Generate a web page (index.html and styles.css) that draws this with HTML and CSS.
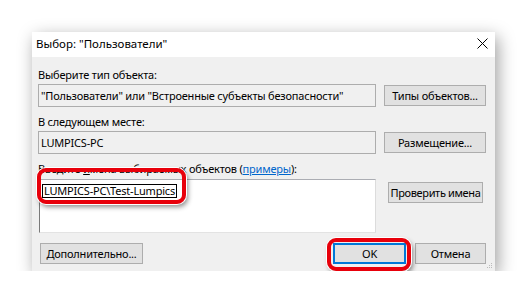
FILE: index.html
```html
<!DOCTYPE html>
<html lang="ru">
<head>
  <meta charset="UTF-8">
  <meta name="viewport" content="width=device-width, initial-scale=1.0">
  <title>Выбор: "Пользователи"</title>
  <link rel="stylesheet" href="styles.css">
</head>
<body>
  <div class="dialog">
    <div class="titlebar">
      <span class="title">Выбор: "Пользователи"</span>
      <span class="close">
        <svg width="11" height="11" viewBox="0 0 11 11"><path d="M0.5 0.5 L10.5 10.5 M10.5 0.5 L0.5 10.5" stroke="#000" stroke-width="1" fill="none"/></svg>
      </span>
    </div>
    <div class="content">
      <div class="label">Выберите тип объекта:</div>
      <div class="row">
        <div class="field readonly">"Пользователи" или "Встроенные субъекты безопасности"</div>
        <button class="btn">Типы объектов...</button>
      </div>

      <div class="label">В следующем месте:</div>
      <div class="row">
        <div class="field readonly">LUMPICS-PC</div>
        <button class="btn">Размещение...</button>
      </div>

      <div class="label">Введите <u>и</u>мена выбираемых объектов (<a class="link">примеры</a>):</div>
      <div class="row top">
        <div class="field names"><span class="entry">LUMPICS-PC\Test-Lumpics</span></div>
        <button class="btn check">Проверить имена</button>
      </div>

      <div class="footer">
        <button class="btn wide">Дополнительно...</button>
        <div class="spacer"></div>
        <button class="btn default">OK</button>
        <button class="btn cancel">Отмена</button>
      </div>
    </div>

    <svg class="grip" width="6" height="6" viewBox="0 0 6 6">
      <rect x="4" y="0" width="1" height="1" fill="#bbb"/>
      <rect x="2" y="2" width="1" height="1" fill="#bbb"/>
      <rect x="4" y="2" width="1" height="1" fill="#bbb"/>
      <rect x="0" y="4" width="1" height="1" fill="#bbb"/>
      <rect x="2" y="4" width="1" height="1" fill="#bbb"/>
      <rect x="4" y="4" width="1" height="1" fill="#bbb"/>
    </svg>

    <div class="mark mark-input"></div>
    <div class="mark mark-ok"></div>
  </div>
</body>
</html>
```

FILE: styles.css
```css
body {
  margin: 0;
  padding: 32px 0 0 32px;
  background: #ffffff;
  font-family: "Noto Sans", "Open Sans", sans-serif;
  font-size: 11px;
  letter-spacing: -0.2px;
  color: #000;
}

.dialog {
  position: relative;
  width: 463px;
  height: 239px;
  display: flex;
  flex-direction: column;
  background: #f0f0f0;
  box-shadow: 3px 5px 16px rgba(0, 0, 0, 0.38);
}

.titlebar {
  height: 25px;
  background: #ffffff;
  display: flex;
  align-items: center;
  justify-content: space-between;
  padding: 0 7px 0 4px;
}

.title {
  font-size: 11.5px;
  letter-spacing: 0;
  margin-top: -2px;
}

.close {
  display: flex;
  margin-top: -3px;
}

.content {
  flex: 1;
  display: flex;
  flex-direction: column;
  padding: 10px 9px 0 6px;
}

.label {
  height: 16px;
  line-height: 16px;
  white-space: nowrap;
}

.label u {
  text-decoration: underline;
}

.link {
  color: #0066cc;
  text-decoration: underline;
}

.row {
  display: flex;
  align-items: center;
  gap: 8px;
  margin: 1px 0 7px;
}

.row.top {
  align-items: flex-start;
  margin-top: 2px;
}

.field {
  flex: 1;
  box-sizing: border-box;
  height: 23px;
  padding: 0 2px;
  display: flex;
  align-items: center;
  white-space: nowrap;
  overflow: hidden;
}

.field.readonly {
  background: #f0f0f0;
  border: 1px solid #adadad;
}

.field.names {
  height: 54px;
  margin-left: 1px;
  align-items: flex-start;
  background: #ffffff;
  border-top: 1px solid #abadb3;
  border-left: 1px solid #7a7a7a;
  border-right: 1px solid #dcdcdc;
  border-bottom: 1px solid #e3e3e3;
  padding: 4px 0 0 2px;
}

.entry {
  border: 1px solid #000;
  padding: 0 1px;
  line-height: 12px;
}

.btn {
  box-sizing: border-box;
  width: 102px;
  height: 21px;
  padding: 0;
  font-family: inherit;
  font-size: 11px;
  letter-spacing: -0.2px;
  white-space: nowrap;
  color: #000;
  background: #e1e1e1;
  border: 1px solid #adadad;
}

.btn.check {
  width: 95px;
  margin: 3px 3px 0 4px;
  letter-spacing: -0.35px;
}

.footer {
  display: flex;
  align-items: center;
  gap: 9px;
  padding-left: 2px;
  margin-top: 3px;
}

.spacer {
  flex: 1;
}

.btn.wide {
  width: 103px;
}

.btn.default {
  width: 73px;
  border: 2px solid #0078d7;
}

.btn.cancel {
  width: 71px;
}

.grip {
  position: absolute;
  right: 2px;
  bottom: 2px;
}

.mark {
  position: absolute;
  box-sizing: border-box;
  border: 4px solid #e8000b;
  border-radius: 9px;
  box-shadow: 0 0 0 1px #ffffff, 2px 3px 5px rgba(0, 0, 0, 0.45);
}

.mark-input {
  left: 5px;
  top: 136px;
  width: 149px;
  height: 36px;
}

.mark-ok {
  left: 295px;
  top: 206px;
  width: 84px;
  height: 33px;
}
```
